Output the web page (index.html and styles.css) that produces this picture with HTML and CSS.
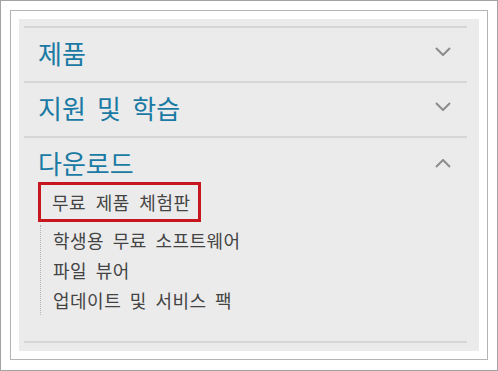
FILE: index.html
```html
<!DOCTYPE html>
<html lang="ko">
<head>
<meta charset="utf-8">
<title>메뉴</title>
<link rel="stylesheet" href="styles.css">
</head>
<body>
<div class="frame">
  <div class="card">
    <div class="panel">
      <div class="section">
        <div class="head">
          <span class="title">제품</span>
          <svg class="chev" width="16" height="9" viewBox="0 0 16 9"><path d="M1 1 L8 8 L15 1" fill="none" stroke="#8c8c8c" stroke-width="2"/></svg>
        </div>
      </div>
      <div class="section">
        <div class="head">
          <span class="title">지원 및 학습</span>
          <svg class="chev" width="16" height="9" viewBox="0 0 16 9"><path d="M1 1 L8 8 L15 1" fill="none" stroke="#8c8c8c" stroke-width="2"/></svg>
        </div>
      </div>
      <div class="section">
        <div class="head head-open">
          <span class="title">다운로드</span>
          <svg class="chev chev-up" width="16" height="9" viewBox="0 0 16 9"><path d="M1 8 L8 1 L15 8" fill="none" stroke="#8c8c8c" stroke-width="2"/></svg>
        </div>
        <div class="highlight">무료 제품 체험판</div>
        <ul class="sub">
          <li>학생용 무료 소프트웨어</li>
          <li>파일 뷰어</li>
          <li>업데이트 및 서비스 팩</li>
        </ul>
      </div>
      <div class="section-end"></div>
    </div>
  </div>
</div>
</body>
</html>
```

FILE: styles.css
```css
html, body {
  margin: 0;
  padding: 0;
  background: #ffffff;
}

body {
  font-family: "Noto Sans CJK KR", "Noto Sans", sans-serif;
}

.frame {
  width: 498px;
  height: 371px;
  box-sizing: border-box;
  border: 1px solid #a3a3a3;
  padding: 9px 9px 10px 9px;
  display: flex;
  flex-direction: column;
}

.card {
  flex: 1;
  border: 1px solid #b4b4b4;
  padding: 8px;
  display: flex;
  flex-direction: column;
}

.panel {
  flex: 1;
  background: #ebebeb;
  padding: 7px 12px 8px 5px;
}

.section {
  border-top: 2px solid #d6d6d6;
}

.head {
  display: flex;
  align-items: center;
  justify-content: space-between;
  padding: 10px 16px 13px 14px;
  height: 30px;
}

.head-open {
  padding-bottom: 4px;
}

.title {
  font-size: 26px;
  line-height: 30px;
  color: #1a7aa4;
  word-spacing: 4px;
}

.chev {
  display: block;
  margin-bottom: 3px;
}

.chev-up {
  margin-bottom: 0;
}

.highlight {
  margin-left: 14px;
  width: 163px;
  height: 40px;
  box-sizing: border-box;
  border: 3px solid #c8161e;
  padding-left: 11px;
  font-size: 18px;
  line-height: 34px;
  color: #444444;
  letter-spacing: 0.5px;
  word-spacing: 4px;
  white-space: nowrap;
}

.sub {
  list-style: none;
  margin: 3px 0 26px 16px;
  padding: 0 0 0 12px;
  border-left: 1px dotted #b5b5b5;
}

.sub li {
  font-size: 18px;
  line-height: 30px;
  height: 30px;
  color: #444444;
  letter-spacing: 0.5px;
  word-spacing: 3px;
  white-space: nowrap;
}

.section-end {
  border-top: 2px solid #d6d6d6;
}
```
